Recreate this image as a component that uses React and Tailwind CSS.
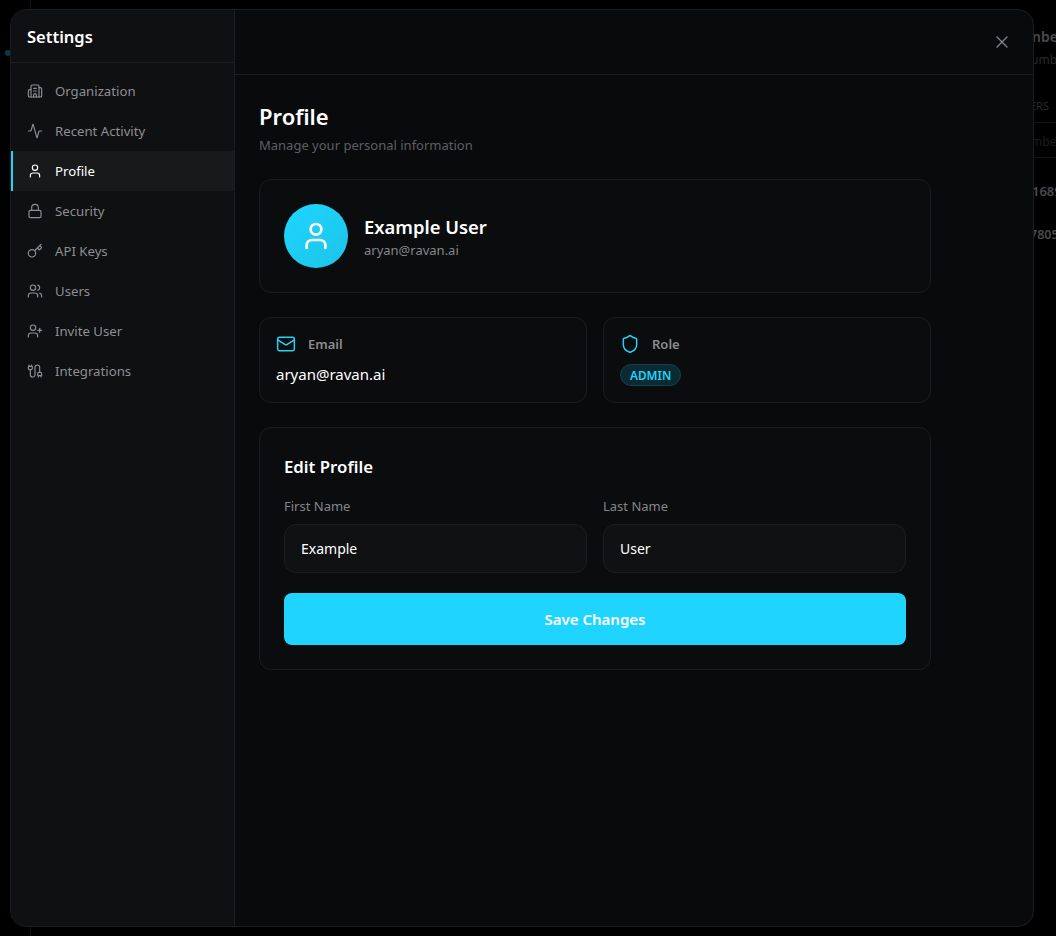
import { Activity, Building2, Cable, Key, Lock, Mail, Shield, User, UserPlus, Users, X } from "lucide-react";

const NAV_ITEMS = [
  { label: "Organization", icon: Building2 },
  { label: "Recent Activity", icon: Activity },
  { label: "Profile", icon: User, active: true },
  { label: "Security", icon: Lock },
  { label: "API Keys", icon: Key },
  { label: "Users", icon: Users },
  { label: "Invite User", icon: UserPlus },
  { label: "Integrations", icon: Cable },
];

function Backdrop() {
  return (
    <div className="absolute inset-0 overflow-hidden text-[#2b2b2e]">
      <div className="absolute left-[30px] top-0 h-full w-px bg-[#111113]" />
      <div className="absolute left-[5px] top-[50px] h-[6px] w-[6px] rounded-full bg-[#0b3a46]" />
      <p className="absolute left-[1032px] top-[27px] text-sm font-semibold leading-5 text-[#4a4a4d]">nber</p>
      <p className="absolute left-[1031px] top-[52px] text-xs leading-4 text-[#2a2a2d]">umb</p>
      <p className="absolute left-[1030px] top-[98px] text-[11px] leading-4">ERS</p>
      <div className="absolute left-[1034px] top-[122px] h-px w-[22px] bg-[#131315]" />
      <p className="absolute left-[1031px] top-[134px] text-xs leading-4 text-[#1c1c1f]">mbe</p>
      <div className="absolute left-[1034px] top-[157px] h-px w-[22px] bg-[#131315]" />
      <p className="absolute left-[1032px] top-[183px] text-[13px] font-semibold leading-4 text-[#4a4a4d]">1689</p>
      <p className="absolute left-[1030px] top-[227px] text-[12.5px] font-semibold leading-4 text-[#4a4a4d]">7805</p>
    </div>
  );
}

function InfoCard({ icon: Icon, label, children }) {
  return (
    <div className="h-[86px] flex-1 rounded-xl border border-[#1c1d20] bg-[#0b0c0e] px-4 pt-4">
      <div className="flex items-center gap-3">
        <Icon className="h-5 w-5 text-[#1fd5fb]" strokeWidth={1.75} />
        <span className="text-[13px] font-semibold leading-5 text-[#8b8b90]">{label}</span>
      </div>
      {children}
    </div>
  );
}

function Field({ label, value }) {
  return (
    <div className="flex-1">
      <label className="block text-[13px] leading-5 text-[#85858a]">{label}</label>
      <input
        readOnly
        value={value}
        className="mt-2 block h-[49px] w-full rounded-xl border border-[#1c1d20] bg-[#101113] px-4 text-sm text-white outline-none"
      />
    </div>
  );
}

export default function App() {
  return (
    <div
      className="relative h-[936px] w-[1056px] overflow-hidden bg-black pl-[10px] pt-[9px]"
      style={{ fontFamily: '"Noto Sans", "Open Sans", sans-serif' }}
    >
      <Backdrop />

      <div className="relative flex h-[918px] w-[1024px] overflow-hidden rounded-2xl border border-[#1c1d20] bg-[#090a0c]">
        {/* Sidebar */}
        <aside className="flex w-[224px] shrink-0 flex-col border-r border-[#1c1d20] bg-[#0f1012]">
          <div className="flex h-[53px] items-center border-b border-[#1c1d20] pl-4 pt-[2px]">
            <h2 className="text-[16.5px] font-semibold text-white">Settings</h2>
          </div>
          <nav className="pt-2">
            {NAV_ITEMS.map(({ label, icon: Icon, active }) => (
              <div
                key={label}
                className={
                  active
                    ? "flex h-10 items-center gap-3 border-l-2 border-[#1fd5fb] bg-[#18191b] pl-[14px] text-white"
                    : "flex h-10 items-center gap-3 border-l-2 border-transparent pl-[14px] text-[#8e8e93]"
                }
              >
                <Icon className="h-4 w-4" strokeWidth={1.75} />
                <span className="text-[13.2px] leading-5">{label}</span>
              </div>
            ))}
          </nav>
        </aside>

        {/* Main */}
        <main className="flex-1">
          <div className="flex h-[65px] items-center justify-end border-b border-[#1c1d20] pr-[21px]">
            <X className="h-5 w-5 text-[#85858a]" strokeWidth={1.5} />
          </div>

          <div className="w-[720px] px-6 pt-[23px]">
            <h1 className="text-[22px] font-semibold leading-9 text-white">Profile</h1>
            <p className="mt-px text-[13px] leading-5 text-[#5e5e63]">Manage your personal information</p>

            <div className="mt-6 flex h-[114px] items-center gap-4 rounded-xl border border-[#1c1d20] bg-[#0b0c0e] px-6">
              <div className="flex h-16 w-16 items-center justify-center rounded-full bg-gradient-to-br from-[#1fd5ff] to-[#1cc4e8]">
                <User className="h-8 w-8 text-white" strokeWidth={2} />
              </div>
              <div className="pt-px">
                <p className="text-[18.4px] font-semibold leading-7 text-white">Example User</p>
                <p className="-mt-px text-[13px] leading-5 text-[#85858a]">aryan@ravan.ai</p>
              </div>
            </div>

            <div className="mt-6 flex gap-4">
              <InfoCard icon={Mail} label="Email">
                <p className="mt-[9px] text-[15px] leading-[22px] text-white">aryan@ravan.ai</p>
              </InfoCard>
              <InfoCard icon={Shield} label="Role">
                <span className="mt-2.5 block w-fit rounded-full border border-[#12404d] bg-[#0b2a33] px-[9px] text-[11.8px] font-semibold leading-5 text-[#1fd5fb]">
                  ADMIN
                </span>
              </InfoCard>
            </div>

            <div className="mt-6 h-[243px] rounded-xl border border-[#1c1d20] bg-[#0b0c0e] px-6 pt-[25px]">
              <h3 className="text-[16.8px] font-semibold leading-7 text-white">Edit Profile</h3>
              <div className="mt-[15px] flex gap-4">
                <Field label="First Name" value="Example" />
                <Field label="Last Name" value="User" />
              </div>
              <button className="mt-5 h-[52px] w-full rounded-lg bg-[#1fd5ff] text-[15px] font-semibold text-white">
                Save Changes
              </button>
            </div>
          </div>
        </main>
      </div>
    </div>
  );
}
